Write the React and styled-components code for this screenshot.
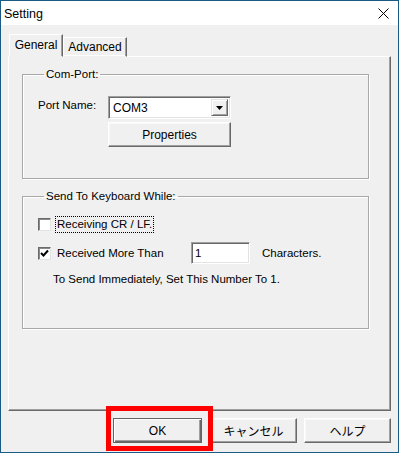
import React from 'react'
import styled, { createGlobalStyle } from 'styled-components'

const GlobalStyle = createGlobalStyle`
	html, body {
		margin: 0;
		padding: 0;
		background: #f0f0f0;
	}
	* {
		box-sizing: border-box;
	}
`

const Window = styled.div`
	width: 399px;
	height: 453px;
	border: 1px solid #1b5a84;
	background: #f0f0f0;
	display: flex;
	flex-direction: column;
	font-family: 'Liberation Sans', Arial, sans-serif;
	font-size: 11.5px;
	color: #000;
	overflow: hidden;
`

const TitleBar = styled.div`
	height: 24px;
	flex-shrink: 0;
	background: #fff;
	display: flex;
	align-items: center;
	justify-content: space-between;
	padding: 1px 9px 0 3px;
`

const Title = styled.span`
	font-size: 12.5px;
`

const Body = styled.div`
	flex: 1;
	display: flex;
	flex-direction: column;
	padding: 9px 7px 0 7px;
	min-height: 0;
`

const TabStrip = styled.div`
	height: 23px;
	display: flex;
	align-items: flex-end;
	padding-left: 1px;
	margin-bottom: -1px;
	position: relative;
	z-index: 1;
	flex-shrink: 0;
`

const Tab = styled.div`
	height: ${p => (p.active ? '23px' : '20px')};
	width: ${p => p.width}px;
	display: flex;
	align-items: ${p => (p.active ? 'flex-start' : 'center')};
	justify-content: center;
	padding-top: ${p => (p.active ? '3px' : '0')};
	background: #f0f0f0;
	border: 1px solid;
	border-color: #ffffff #696969 transparent #ffffff;
	box-shadow: ${p => (p.active ? 'inset -1px 0 #a0a0a0' : 'inset -1px 0 #a0a0a0, inset 0 -1px #ffffff')};
	font-size: 12px;
`

const Panel = styled.div`
	flex: 1;
	display: flex;
	flex-direction: column;
	padding-left: 13px;
	border: 1px solid;
	border-color: #ffffff #696969 #696969 #ffffff;
	box-shadow: inset -1px -1px #a0a0a0;
`

const Group = styled.fieldset`
	width: 347px;
	margin: 10px 0 0 0;
	padding: ${p => p.pad};
	border: 1px solid #a8a8a8;
	box-shadow: 1px 1px #ffffff, inset 1px 1px #ffffff;
	min-width: 0;
`

const Legend = styled.legend`
	margin-left: 6px;
	padding: 0 2px;
	line-height: 14px;
	height: 14px;
`

const PortRow = styled.div`
	display: flex;
	align-items: flex-start;
`

const FieldLabel = styled.div`
	width: 70px;
	padding-top: 2px;
	line-height: 14px;
`

const Stack = styled.div`
	display: flex;
	flex-direction: column;
	gap: 3px;
`

const Combo = styled.div`
	width: 123px;
	height: 23px;
	background: #fff;
	border: 1px solid;
	border-color: #a0a0a0 #ffffff #ffffff #a0a0a0;
	box-shadow: inset 1px 1px #696969, inset -1px -1px #e3e3e3;
	display: flex;
	align-items: center;
	padding: 2px 2px 2px 4px;
	font-size: 12px;
`

const ComboText = styled.span`
	flex: 1;
`

const DropButton = styled.div`
	width: 17px;
	height: 17px;
	background: #f0f0f0;
	border: 1px solid;
	border-color: #e3e3e3 #696969 #696969 #e3e3e3;
	box-shadow: inset 1px 1px #fff, inset -1px -1px #a0a0a0;
	display: flex;
	align-items: center;
	justify-content: center;
`

const Button = styled.div`
	width: ${p => p.width}px;
	height: 25px;
	display: flex;
	align-items: center;
	justify-content: center;
	background: #f0f0f0;
	border: 1px solid;
	border-color: ${p => (p.primary ? '#646464' : '#ffffff #696969 #696969 #ffffff')};
	box-shadow: ${p =>
		p.primary
			? 'inset 1px 1px #ffffff, inset -1px -1px #696969, inset -2px -2px #a0a0a0'
			: 'inset -1px -1px #a0a0a0, inset 1px 1px #f8f8f8'};
	font-family: 'Liberation Sans', 'Noto Sans CJK JP', sans-serif;
	font-size: 12px;
`

const CheckRow = styled.div`
	display: flex;
	align-items: center;
	height: ${p => p.h}px;
	margin-top: ${p => p.mt}px;
`

const Check = styled.div`
	width: 13px;
	height: 13px;
	flex-shrink: 0;
	background: #fff;
	border: 1px solid;
	border-color: #6a6a6a #e3e3e3 #e3e3e3 #6a6a6a;
	box-shadow: inset 1px 1px #8a8a8a;
	display: flex;
	align-items: center;
	justify-content: center;
`

const CheckLabel = styled.span`
	margin-left: 4px;
	padding: 1px 1px;
	line-height: 13px;
	border: 1px ${p => (p.focused ? 'dotted #000' : 'solid transparent')};
	width: ${p => (p.width ? `${p.width}px` : 'auto')};
	white-space: nowrap;
`

const Edit = styled.div`
	width: 59px;
	height: 22px;
	background: #fff;
	border: 1px solid;
	border-color: #a0a0a0 #ffffff #ffffff #a0a0a0;
	box-shadow: inset 1px 1px #696969, inset -1px -1px #e3e3e3;
	display: flex;
	align-items: center;
	padding-left: 3px;
`

const Suffix = styled.span`
	margin-left: 12px;
`

const Note = styled.div`
	margin-top: 8px;
	padding-left: 15px;
	line-height: 14px;
`

const Footer = styled.div`
	flex-shrink: 0;
	display: flex;
	justify-content: flex-end;
	gap: 7px;
	padding: 7px 0 9px 0;
`

const Marked = styled.div`
	position: relative;
	display: flex;
	margin-right: 1px;
`

const Highlight = styled.div`
	position: absolute;
	left: -7px;
	top: -12px;
	width: 107px;
	height: 45px;
	border: 5px solid #ff0000;
	pointer-events: none;
	z-index: 2;
`

const CloseIcon = () => (
	<svg width="11" height="11" viewBox="0 0 11 11">
		<path d="M0.5 0.5 L10.5 10.5 M10.5 0.5 L0.5 10.5" stroke="#000" strokeWidth="1" fill="none" />
	</svg>
)

const Arrow = () => (
	<svg width="7" height="4" viewBox="0 0 7 4">
		<path d="M0 0 H7 L3.5 4 Z" fill="#000" />
	</svg>
)

const Tick = () => (
	<svg width="9" height="9" viewBox="0 0 9 9">
		<path d="M1 4 L3.5 6.5 L8 1.5" stroke="#000" strokeWidth="2" fill="none" />
	</svg>
)

export default function App() {
	return (
		<>
			<GlobalStyle />
			<Window>
				<TitleBar>
					<Title>Setting</Title>
					<CloseIcon />
				</TitleBar>
				<Body>
					<TabStrip>
						<Tab active width={54}>General</Tab>
						<Tab width={64}>Advanced</Tab>
					</TabStrip>
					<Panel>
						<Group pad="15px 0 31px 15px">
							<Legend>Com-Port:</Legend>
							<PortRow>
								<FieldLabel>Port Name:</FieldLabel>
								<Stack>
									<Combo>
										<ComboText>COM3</ComboText>
										<DropButton>
											<Arrow />
										</DropButton>
									</Combo>
									<Button width={123}>Properties</Button>
								</Stack>
							</PortRow>
						</Group>
						<Group pad="0 0 42px 15px">
							<Legend>Send To Keyboard While:</Legend>
							<CheckRow h={17} mt={13}>
								<Check />
								<CheckLabel focused>Receiving CR / LF.</CheckLabel>
							</CheckRow>
							<CheckRow h={22} mt={9}>
								<Check>
									<Tick />
								</Check>
								<CheckLabel width={136}>Received More Than</CheckLabel>
								<Edit>1</Edit>
								<Suffix>Characters.</Suffix>
							</CheckRow>
							<Note>To Send Immediately, Set This Number To 1.</Note>
						</Group>
					</Panel>
					<Footer>
						<Marked>
							<Button primary width={89}>OK</Button>
							<Highlight />
						</Marked>
						<Button width={87}>キャンセル</Button>
						<Button width={87}>ヘルプ</Button>
					</Footer>
				</Body>
			</Window>
		</>
	)
}
